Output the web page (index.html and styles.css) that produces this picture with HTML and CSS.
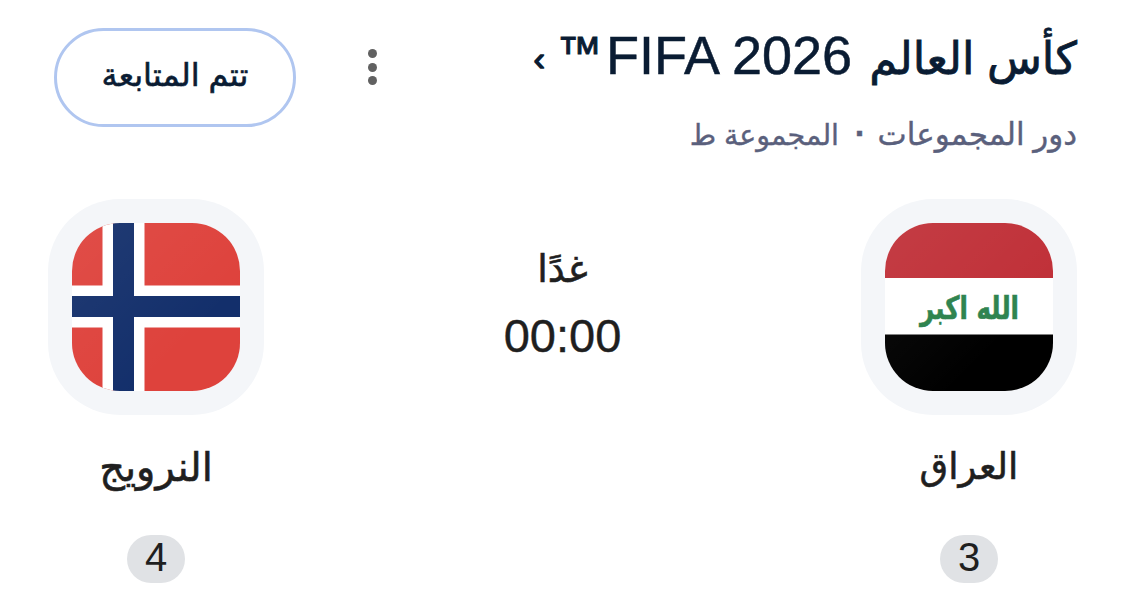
FILE: index.html
```html
<!DOCTYPE html>
<html lang="ar" dir="rtl">
<head>
  <meta charset="UTF-8" />
  <meta name="viewport" content="width=device-width, initial-scale=1.0"/>
  <title>كأس العالم</title>
  <link rel="stylesheet" href="styles.css">
</head>
<body>
  <header>
    <div class="heading">
      <h1><span class="ar">كأس العالم</span> FIFA 2026<span class="tm">™</span> <span class="chevron">›</span></h1>
      <p>دور المجموعات <b>·</b> <span class="group">المجموعة ط</span></p>
    </div>
    <div class="actions">
      <div class="menu"><i></i><i></i><i></i></div>
      <button class="follow">تتم المتابعة</button>
    </div>
  </header>

  <main class="match">
    <div class="team">
      <div class="badge">
        <svg class="flag" viewBox="0 0 168 168">
          <defs>
            <linearGradient id="shine" x1="0" y1="0" x2="1" y2="1">
              <stop offset="0" stop-color="#fff" stop-opacity=".06"/>
              <stop offset=".7" stop-color="#fff" stop-opacity="0"/>
            </linearGradient>
          </defs>
          <rect width="168" height="168" fill="#fff"/>
          <rect width="168" height="55" fill="#c03038"/>
          <rect y="111.500" width="168" height="56.500" fill="#000"/>
          <rect width="168" height="168" fill="url(#shine)"/>
          <text class="takbir" x="84.500" y="96" text-anchor="middle" textLength="99" lengthAdjust="spacingAndGlyphs">الله اكبر</text>
        </svg>
      </div>
      <div class="name iraq">العراق</div>
      <div class="rank">3</div>
    </div>

    <div class="kickoff">
      <div class="day">غدًا</div>
      <div class="time">00:00</div>
    </div>

    <div class="team">
      <div class="badge">
        <svg class="flag" viewBox="0 0 168 168">
          <rect width="168" height="168" fill="#de423c"/>
          <path d="M51.500 0V168M0 83.500H168" stroke="#fff" stroke-width="42"/>
          <path d="M51.500 0V168M0 83.500H168" stroke="#132f6b" stroke-width="21"/>
          <rect width="168" height="168" fill="url(#shine)"/>
        </svg>
      </div>
      <div class="name norway">النرويج</div>
      <div class="rank">4</div>
    </div>
  </main>
</body>
</html>
```
FILE: styles.css
```css
* {
  box-sizing: border-box;
}
body {
  background: #fff;
  color: #1f1f1f;
  font-family: "Liberation Sans", "DejaVu Sans", sans-serif;
  margin: 0;
  padding: 28px 48px 0;
}
header {
  display: flex;
  justify-content: space-between;
  height: 171px;
}
h1 {
  margin: 0;
  font-size: 54px;
  font-weight: normal;
  line-height: 54px;
  color: #0a1c33;
  white-space: nowrap;
  -webkit-text-stroke: 0.5px;
}
h1 .ar {
  margin-left: 2px;
  font-size: 45px;
  line-height: 1;
  -webkit-text-stroke: 0.8px;
}
h1 .tm {
  margin-right: 4px;
  font-size: 45px;
  line-height: 1;
  vertical-align: 6px;
  -webkit-text-stroke: 1px;
}
h1 .chevron {
  margin-right: -3px;
  font-size: 34px;
  line-height: 1;
  vertical-align: 4px;
  -webkit-text-stroke: 1.5px;
}
.heading p {
  margin: 28px 0 0;
  font-size: 31px;
  line-height: 50px;
  color: #5a607c;
  white-space: nowrap;
  -webkit-text-stroke: 0.4px;
}
.heading b {
  margin: 0 3px 0 7px;
  font-size: 34px;
  line-height: 1;
}
.group {
  font-size: 28.5px;
}
.actions {
  display: flex;
  gap: 76px;
  padding-left: 6px;
}
.menu {
  display: flex;
  flex-direction: column;
  gap: 4.5px;
  padding-top: 21px;
  margin-left: -4.5px;
}
.menu i {
  width: 9px;
  height: 9px;
  border-radius: 50%;
  background: #616161;
}
.follow {
  width: 242px;
  height: 99px;
  padding: 0 0 6px;
  border: 3px solid #b0c6f0;
  border-radius: 50px;
  background: #fff;
  color: #0a1c33;
  font-family: inherit;
  font-size: 32px;
  -webkit-text-stroke: 0.6px;
}
.match {
  display: flex;
  justify-content: space-between;
}
.team {
  display: flex;
  flex-direction: column;
  align-items: center;
  width: 216px;
}
.badge {
  width: 216px;
  height: 216px;
  padding: 24px;
  border-radius: 72px;
  background: #f4f6f9;
}
.flag {
  display: block;
  width: 168px;
  height: 168px;
  border-radius: 48px;
}
.takbir {
  direction: ltr;
  font-family: "DejaVu Sans", sans-serif;
  font-size: 32px;
  font-weight: bold;
  fill: #2f8450;
  stroke: #2f8450;
  stroke-width: 0.6px;
}
.name {
  margin-top: 24px;
  line-height: 56px;
  white-space: nowrap;
  -webkit-text-stroke: 0.6px;
}
.iraq {
  font-size: 37px;
}
.norway {
  font-size: 40px;
}
.rank {
  width: 58px;
  height: 48px;
  margin-top: 40px;
  border-radius: 24px;
  background: #e0e2e5;
  font-size: 40px;
  line-height: 45px;
  text-align: center;
}
.kickoff {
  padding-top: 40px;
  text-align: center;
}
.day {
  font-size: 38px;
  line-height: 60px;
  -webkit-text-stroke: 0.6px;
}
.time {
  margin-top: 9px;
  font-size: 47px;
  line-height: 56px;
  -webkit-text-stroke: 0.4px;
}
```
